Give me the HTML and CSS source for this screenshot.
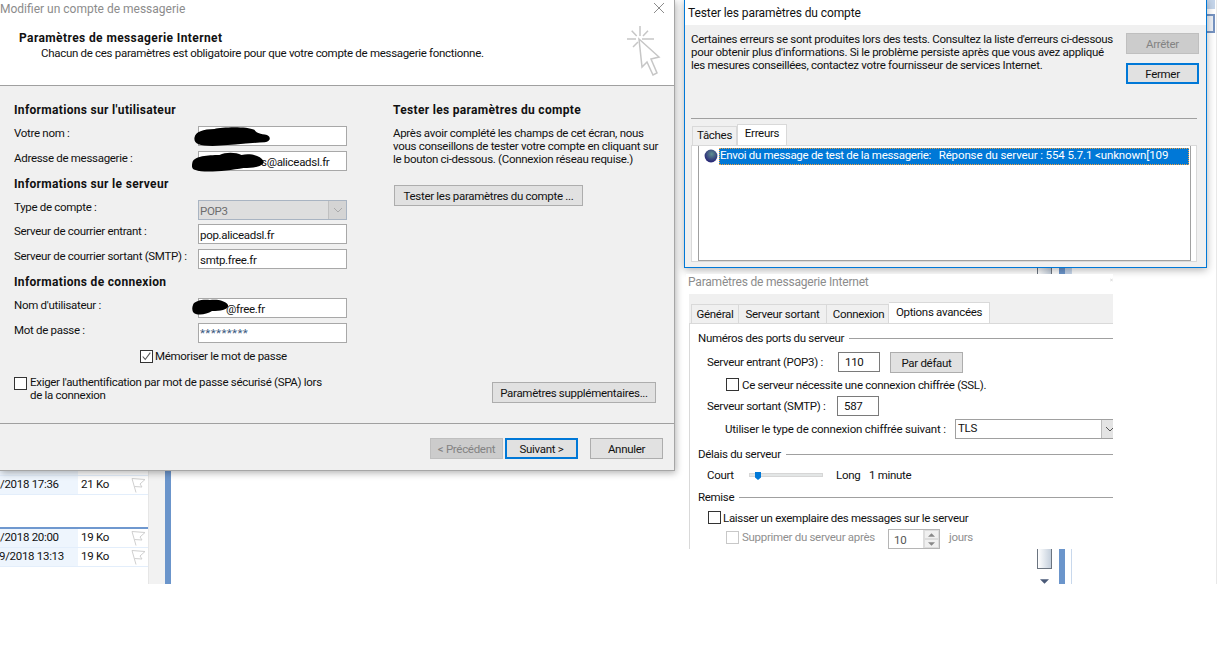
FILE: index.html
```html
<!DOCTYPE html>
<html lang="fr">
<head>
<meta charset="utf-8">
<title>Modifier un compte de messagerie</title>
<link rel="stylesheet" href="styles.css">
</head>
<body>
<div class="desk">

  <section class="maillist">
    <div class="mstub"></div>
    <div class="mrow"><span class="mdate">/2018 17:36</span><span class="msize">21 Ko</span><svg class="flag" viewBox="0 0 14 16"><path d="M1 1.5L14 2.5L9 7L11 10L3.5 9.5M1 1.5L5 15.5" fill="none" stroke="#cfcfcf"/></svg></div>
    <div class="mgap"></div>
    <div class="mrow"><span class="mdate">/2018 20:00</span><span class="msize">19 Ko</span><svg class="flag" viewBox="0 0 14 16"><path d="M1 1.5L14 2.5L9 7L11 10L3.5 9.5M1 1.5L5 15.5" fill="none" stroke="#cfcfcf"/></svg></div>
    <div class="mrow"><span class="mdate mdate-cut">9/2018 13:13</span><span class="msize">19 Ko</span><svg class="flag" viewBox="0 0 14 16"><path d="M1 1.5L14 2.5L9 7L11 10L3.5 9.5M1 1.5L5 15.5" fill="none" stroke="#cfcfcf"/></svg></div>
  </section>
  <div class="vscroll"></div>
  <div class="vbar"></div>

  <div class="scrollpiece sp-top"></div>
  <div class="scrollpiece sp-thumb"></div>
  <svg class="sp-arrow" viewBox="0 0 10 5"><path d="M0 0H10L5 5Z" fill="#4a5a78"/></svg>
  <div class="bluepiece bp-top"></div>
  <div class="bluepiece bp-bottom"></div>
  <div class="edge-a"></div>
  <div class="edge-b"></div>
  <div class="edge-line"></div>

  <section class="win win-account">
    <header class="acc-head">
      <div class="wintitle">Modifier un compte de messagerie</div>
      <svg class="close" viewBox="0 0 12 12"><path d="M1 1L11 11M11 1L1 11" stroke="#8c8c8c" fill="none"/></svg>
      <h1 class="acc-h1">Paramètres de messagerie Internet</h1>
      <p class="acc-sub">Chacun de ces paramètres est obligatoire pour que votre compte de messagerie fonctionne.</p>
      <svg class="cursor" viewBox="0 0 34 50"><g stroke="#c6c6c6" fill="none" stroke-width="1.5"><path d="M13 0V10M0 13H9M15 13H27M4.7 4.7L9.7 10M21 4.7L16 10M6 21L11 16"/><path d="M12 13L32 31L24 33L30 47L26 49L20 36L15 41Z" fill="#fff"/></g></svg>
    </header>

    <div class="acc-body">
      <div class="acc-left">
        <h2 class="sect sect-first">Informations sur l'utilisateur</h2>
        <div class="frow"><label>Votre nom :</label><span class="input"></span></div>
        <div class="frow"><label>Adresse de messagerie :</label><span class="input input-right">s@aliceadsl.fr</span></div>
        <h2 class="sect">Informations sur le serveur</h2>
        <div class="frow frow-type"><label>Type de compte :</label><span class="select"><span>POP3</span><i class="sel-btn"><svg viewBox="0 0 10 6"><path d="M1 1L5 5L9 1" stroke="#aaa" fill="none"/></svg></i></span></div>
        <div class="frow"><label>Serveur de courrier entrant :</label><span class="input">pop.aliceadsl.fr</span></div>
        <div class="frow"><label>Serveur de courrier sortant (SMTP) :</label><span class="input">smtp.free.fr</span></div>
        <h2 class="sect">Informations de connexion</h2>
        <div class="frow"><label>Nom d'utilisateur :</label><span class="input input-user">@free.fr</span></div>
        <div class="frow"><label>Mot de passe :</label><span class="input input-pw">*********</span></div>
        <div class="remember"><span class="check"><svg viewBox="0 0 13 13"><path d="M2 6.5L5 10L11 2" stroke="#555" stroke-width="1.3" fill="none"/></svg></span><span>Mémoriser le mot de passe</span></div>
        <div class="spa"><span class="check"></span><span class="spa-text">Exiger l'authentification par mot de passe sécurisé (SPA) lors de la connexion</span></div>
      </div>
      <div class="acc-right">
        <h2 class="sect sect-first">Tester les paramètres du compte</h2>
        <p class="acc-p">Après avoir complété les champs de cet écran, nous vous conseillons de tester votre compte en cliquant sur le bouton ci-dessous. (Connexion réseau requise.)</p>
        <button class="btn btn-test">Tester les paramètres du compte ...</button>
        <button class="btn btn-more">Paramètres supplémentaires...</button>
      </div>
    </div>

    <footer class="acc-foot">
      <button class="btn btn-foot btn-off">&lt; Précédent</button>
      <button class="btn btn-foot btn-def">Suivant &gt;</button>
      <button class="btn btn-foot btn-cancel">Annuler</button>
    </footer>
  </section>

  <section class="win win-test">
    <div class="test-title">Tester les paramètres du compte</div>
    <div class="test-body">
      <div class="test-top">
        <p class="test-p">Certaines erreurs se sont produites lors des tests. Consultez la liste d'erreurs ci-dessous pour obtenir plus d'informations. Si le problème persiste après que vous avez appliqué les mesures conseillées, contactez votre fournisseur de services Internet.</p>
        <div class="test-btns">
          <button class="btn btn-foot btn-off">Arrêter</button>
          <button class="btn btn-foot btn-def">Fermer</button>
        </div>
      </div>
      <div class="test-rule"></div>
      <div class="test-tabs">
        <span class="ttab">Tâches</span>
        <span class="ttab ttab-on">Erreurs</span>
      </div>
      <div class="test-panel">
        <div class="test-list">
          <div class="err-row">
            <svg class="err-ico" viewBox="0 0 14 14"><defs><radialGradient id="g" cx="0.55" cy="0.35" r="0.6"><stop offset="0" stop-color="#5f8f8f"/><stop offset="1" stop-color="#2a2a78"/></radialGradient></defs><circle cx="7" cy="7" r="6.4" fill="url(#g)"/></svg>
            <span class="err-text">Envoi du message de test de la messagerie:&nbsp;&nbsp; <span class="err-srv">Réponse du serveur : 554 5.7.1 &lt;unknown[109</span></span>
          </div>
        </div>
      </div>
    </div>
  </section>

  <section class="win-adv">
    <div class="adv-title">Paramètres de messagerie Internet</div>
    <svg class="adv-close" viewBox="0 0 6 12"><path d="M0 1L6 7M0 7L6 1" stroke="#b8b8b8" fill="none"/></svg>
    <div class="adv-tabs">
      <span class="atab">Général</span>
      <span class="atab">Serveur sortant</span>
      <span class="atab">Connexion</span>
      <span class="atab atab-on">Options avancées</span>
    </div>
    <div class="adv-panel">
      <div class="legend"><span>Numéros des ports du serveur</span></div>
      <div class="aline aline-pop"><span class="alabel">Serveur entrant (POP3) :</span><span class="abox">110</span><button class="btn btn-def-port">Par défaut</button></div>
      <div class="aline aline-ssl"><span class="check"></span><span class="low">Ce serveur nécessite une connexion chiffrée (SSL).</span></div>
      <div class="aline aline-smtp"><span class="alabel">Serveur sortant (SMTP) :</span><span class="abox">587</span></div>
      <div class="aline aline-enc"><span class="enc-label">Utiliser le type de connexion chiffrée suivant :</span><span class="aselect"><span>TLS</span><i class="asel-btn"><svg viewBox="0 0 10 6"><path d="M1 1L5 5L9 1" stroke="#555" fill="none"/></svg></i></span></div>
      <div class="legend legend-delay"><span>Délais du serveur</span></div>
      <div class="aline aline-delay"><span class="court">Court</span><span class="slider"><i class="thumb"></i></span><span class="long">Long</span><span>1 minute</span></div>
      <div class="legend legend-remise"><span>Remise</span></div>
      <div class="aline aline-keep"><span class="check"></span><span class="low">Laisser un exemplaire des messages sur le serveur</span></div>
      <div class="aline aline-del"><span class="check check-off"></span><span class="del-label">Supprimer du serveur après</span><span class="spin"><span class="spin-val">10</span><span class="spin-btns"><i><svg viewBox="0 0 8 4"><path d="M0 4H8L4 0Z" fill="#888"/></svg></i><i><svg viewBox="0 0 8 4"><path d="M0 0H8L4 4Z" fill="#888"/></svg></i></span></span><span class="jours">jours</span></div>
    </div>
  </section>

  <svg class="blob blob-name" viewBox="0 0 82 20"><path d="M1 11C2 5 10 2 22 2C30 0 56 -1 64 3C66 6 68 7 75 8C82 9 82 15 75 16C60 17 40 19 20 20C5 20 0 17 1 11Z" fill="#000"/></svg>
  <svg class="blob blob-mail" viewBox="0 0 72 20"><path d="M1 10C3 4 16 3 28 3C34 0 44 0 50 3C60 1 69 4 72 9C73 14 64 16 52 16C36 19 12 21 4 18C0 17 0 14 1 10Z" fill="#000"/></svg>
  <svg class="blob blob-user" viewBox="0 0 36 16"><path d="M1 6C2 2 10 0 18 1C26 0 34 2 36 6C37 10 30 12 20 12C14 16 4 17 1 13C0 11 0 8 1 6Z" fill="#000"/></svg>
</div>
</body>
</html>
```
FILE: styles.css
```css
* { box-sizing: border-box; }
html, body { margin: 0; padding: 0; background: #fff; }
body { font: 11.5px/13px Roboto, "Liberation Sans", sans-serif; letter-spacing: -0.3px; color: #111; }
.desk { position: relative; width: 1218px; height: 648px; overflow: hidden; }

/* background mail list */
.maillist { position: absolute; left: 0; top: 471px; width: 149px; height: 113px; border-right: 1px solid #e6e6e6; }
.mstub { height: 5px; border-bottom: 1px solid #e3eefb; background: linear-gradient(90deg, #eef5fd 78px, #fff 78px); }
.mrow { display: flex; align-items: center; height: 19px; border-bottom: 1px solid #e3eefb; }
.mdate { display: block; width: 78px; height: 18px; line-height: 16px; background: #eef5fd; white-space: nowrap; overflow: hidden; }
.mdate-cut { text-indent: -1px; }
.msize { display: block; width: 50px; height: 18px; line-height: 16px; padding-left: 3px; }
.flag { width: 14px; height: 16px; margin-left: 3px; }
.mgap { height: 34px; border-bottom: 2px solid #6f98cf; }
.vscroll { position: absolute; left: 149px; top: 471px; width: 16px; height: 113px; background: #f2f2f2; }
.vbar { position: absolute; left: 165px; top: 471px; width: 6px; height: 113px; background: #6b95cb; }

.scrollpiece { position: absolute; left: 1037px; width: 15px; border-left: 1px solid #6b7480; border-right: 1px solid #6b7480; background: linear-gradient(90deg, #fff, #c4cfdc); }
.sp-top { top: 268px; height: 7px; }
.sp-thumb { top: 549px; height: 20px; border-bottom: 1px solid #6b7480; }
.sp-arrow { position: absolute; left: 1040px; top: 579px; width: 9px; height: 5px; }
.bluepiece { position: absolute; left: 1059px; width: 13px; background: #6b95cb; border-right: 1px solid #c8d8ec; box-shadow: inset -6px 0 0 #fff; }
.bp-top { top: 268px; height: 7px; box-shadow: inset -6px 0 0 #c3d3e8; }
.bp-bottom { top: 549px; height: 35px; }
.edge-a { position: absolute; left: 1207px; top: 0; width: 8px; height: 9px; background: #c5d5ea; }
.edge-b { position: absolute; left: 1207px; top: 14px; width: 8px; height: 19px; border: 2px solid #7694c2; border-left: 0; background: #eef2f8; }
.edge-line { position: absolute; left: 1216px; top: 0; width: 1px; height: 584px; background: #e8e8e8; }

/* windows */
.win { position: absolute; }
.win-account { left: 0; top: 0; width: 675px; height: 471px; background: #f0f0f0; border-right: 1px solid #a6a6a6; border-bottom: 1px solid #a6a6a6; box-shadow: 1px 2px 7px rgba(0,0,0,.3); display: flex; flex-direction: column; }
.acc-head { position: relative; height: 86px; background: #fff; border-bottom: 1px solid #a0a0a0; padding-left: 19px; flex: none; }
.wintitle { margin-left: -19px; padding-top: 3px; font-size: 12px; letter-spacing: 0; color: #8c8c8c; }
.close { position: absolute; left: 653px; top: 2px; width: 12px; height: 12px; }
.cursor { position: absolute; left: 627px; top: 26px; width: 34px; height: 50px; }
.acc-h1 { margin: 16px 0 0; font-size: 12px; line-height: 13px; font-weight: 700; letter-spacing: 0.4px; }
.acc-sub { margin: 2px 0 0 22px; }

.acc-body { flex: 1; display: flex; }
.acc-left { flex: none; width: 393px; padding-left: 14px; }
.acc-right { position: relative; flex: 1; }
.sect { margin: 7px 0 0; font-size: 12px; line-height: 13px; font-weight: 700; letter-spacing: 0.32px; }
.sect-first { margin-top: 0; padding-top: 18px; }
.frow { display: flex; justify-content: space-between; width: 333px; height: 20px; margin-top: 5px; }
.frow label { padding-top: 1px; white-space: nowrap; }
.sect + .frow { margin-top: 9px; }
.frow-type + .frow { margin-top: 4px; }
.input { display: block; width: 149px; height: 20px; background: #fff; border: 1px solid #a8a8a8; padding: 4px 1px 0; white-space: nowrap; }
.input-right { padding-left: 62px; }
.input-user { padding-left: 27px; }
.input-pw { padding-top: 3px; color: #3a5a80; letter-spacing: 0.4px; }
.select { display: flex; justify-content: space-between; width: 149px; height: 20px; border: 1px solid #a9b4c2; background: #dedede; color: #6d6d6d; padding: 4px 1px 0; }
.sel-btn { display: block; width: 18px; height: 18px; margin: -4px -1px 0 0; background: #d4d4d4; border-left: 1px solid #c0c0c0; padding: 6px 4px; }
.sel-btn svg { display: block; width: 10px; height: 6px; }
.remember { display: flex; align-items: center; gap: 2px; margin: 6px 0 0 126px; height: 14px; }
.check { display: block; flex: none; width: 13px; height: 13px; background: #fff; border: 1px solid #333; }
.check svg { display: block; width: 11px; height: 11px; }
.spa { display: flex; gap: 3px; margin-top: 13px; }
.spa .check { margin-top: 1px; }
.spa-text { display: block; width: 296px; }
.acc-p { margin: 10px 0 0; width: 266px; }
.btn { display: block; margin: 0; padding: 2px 0 0; font: inherit; letter-spacing: inherit; color: #111; background: #e1e1e1; border: 1px solid #adadad; height: 21px; line-height: 17px; text-align: center; white-space: nowrap; }
.btn-test { position: absolute; left: 1px; top: 99px; width: 189px; }
.btn-more { position: absolute; left: 99px; top: 296px; width: 164px; }
.acc-foot { flex: none; height: 47px; border-top: 1px solid #a0a0a0; display: flex; padding: 14px 0 0 430px; }
.btn-foot { width: 73px; }
.btn-off { background: #ccc; border-color: #bfbfbf; color: #838383; }
.btn-def { border: 2px solid #0078d7; padding-top: 1px; }
.acc-foot .btn-def { margin-left: 2px; }
.btn-cancel { margin-left: 12px; }

/* test window */
.win-test { left: 684px; top: -1px; width: 523px; height: 269px; background: #fff; border: 1px solid #0078d7; box-shadow: 0 2px 8px rgba(0,0,0,.3); display: flex; flex-direction: column; }
.test-title { height: 25px; padding: 7px 0 0 3px; flex: none; font-size: 12px; letter-spacing: -0.1px; }
.test-body { flex: 1; background: #f0f0f0; padding-left: 6px; }
.test-top { display: flex; justify-content: space-between; height: 93px; width: 508px; }
.test-p { margin: 8px 0 0; width: 428px; }
.test-btns { display: flex; flex-direction: column; gap: 9px; padding-top: 8px; }
.test-rule { height: 1px; width: 506px; background: #a0a0a0; }
.test-tabs { display: flex; align-items: flex-end; height: 26px; padding-left: 1px; }
.ttab { display: block; height: 19px; width: 45px; background: #f0f0f0; border: 1px solid #d9d9d9; border-bottom: 0; text-align: center; padding-top: 2px; }
.ttab-on { height: 21px; width: 50px; background: #fff; padding-top: 2px; }
.test-panel { width: 506px; height: 117px; background: #fff; border: 1px solid #d9d9d9; padding-left: 6px; }
.test-list { width: 493px; height: 115px; border: 1px solid #a0a0a0; border-top: 0; padding: 2px 0 0 5px; }
.err-row { display: flex; align-items: flex-start; gap: 1px; }
.err-ico { width: 14px; height: 14px; flex: none; margin-top: 1px; }
.err-text { display: block; width: 470px; height: 17px; padding: 1px 0 0 1px; background: #0078d7; color: #fff; outline: 1px dotted #f0a040; outline-offset: -1px; white-space: nowrap; }
.err-srv { letter-spacing: -0.12px; }

/* advanced options window */
.win-adv { position: absolute; left: 686px; top: 274px; width: 427px; height: 275px; background: #fff; overflow: hidden; }
.adv-title { height: 20px; padding: 2px 0 0 2px; font-size: 12px; letter-spacing: -0.2px; color: #8c8c8c; white-space: nowrap; }
.adv-close { position: absolute; left: 424px; top: 2px; width: 3px; height: 10px; }
.adv-tabs { display: flex; align-items: flex-end; height: 29px; margin-left: 3px; padding-left: 2px; background: #f0f0f0; }
.atab { display: block; height: 19px; padding-top: 3px; border: 1px solid #d9d9d9; border-bottom: 0; border-left: 0; background: #f0f0f0; white-space: nowrap; text-align: center; }
.atab:first-child { width: 48px; border-left: 1px solid #d9d9d9; }
.atab:nth-child(2) { width: 88px; }
.atab:nth-child(3) { width: 62px; padding-left: 2px; }
.atab-on { width: 101px; height: 21px; background: #fff; padding-top: 3px; }
.adv-panel { margin-left: 3px; height: 226px; background: #fff; border-left: 1px solid #d9d9d9; border-top: 1px solid #d9d9d9; padding-left: 8px; }
.legend { display: flex; align-items: center; gap: 5px; height: 13px; margin-top: 8px; }
.legend::after { content: ""; flex: 1; height: 1px; background: #a0a0a0; }
.aline { display: flex; align-items: center; white-space: nowrap; }
.alabel { display: block; }
.low { display: block; padding-top: 1px; }
.abox { display: block; flex: none; width: 42px; height: 20px; border: 1px solid #7a7a7a; padding: 3px 0 0 6px; background: #fff; }
.aline-pop { margin: 7px 0 0 9px; height: 20px; }
.aline-pop .alabel { width: 131px; }
.btn-def-port { width: 73px; margin-left: 10px; }
.aline-ssl { margin: 6px 0 0 28px; height: 13px; gap: 3px; }
.aline-smtp { margin: 5px 0 0 9px; height: 20px; }
.aline-smtp .alabel { width: 130px; }
.aline-enc { margin: 3px 0 0 27px; height: 20px; }
.enc-label { display: block; flex: none; width: 230px; padding-top: 1px; letter-spacing: -0.2px; }
.aselect { display: flex; justify-content: space-between; flex: none; width: 170px; height: 20px; border: 1px solid #a0a0a0; padding: 2px 0 0 2px; }
.asel-btn { display: block; width: 23px; height: 18px; margin-top: -2px; background: #e4e4e4; border-left: 1px solid #bbb; padding: 6px 3px; }
.asel-btn svg { display: block; width: 10px; height: 6px; }
.legend-delay { margin-top: 9px; }
.aline-delay { margin: 7px 0 0 9px; height: 14px; }
.court { display: block; width: 42px; }
.slider { position: relative; display: block; width: 74px; height: 4px; background: #e3e6e6; border: 1px solid #d6d6d6; }
.thumb { position: absolute; left: 5px; top: -2px; width: 6px; height: 8px; background: #0078d7; clip-path: polygon(0 0, 100% 0, 100% 70%, 50% 100%, 0 70%); }
.long { display: block; margin-left: 13px; width: 33px; }
.legend-remise { margin-top: 9px; }
.aline-keep { margin: 7px 0 0 10px; height: 13px; gap: 2px; }
.aline-del { margin: 5px 0 0 28px; height: 20px; color: #8f8f8f; gap: 3px; }
.aline-del .check { margin-top: -3px; }
.check-off { border-color: #c8c8c8; }
.del-label { display: block; width: 133px; margin-top: -3px; }
.spin { display: flex; flex: none; width: 52px; height: 20px; border: 1px solid #b5b5b5; margin-left: 10px; background: #fff; }
.spin-val { display: block; width: 34px; padding: 4px 0 0 5px; color: #555; }
.spin-btns { flex: 1; display: flex; flex-direction: column; background: #f0f0f0; border-left: 1px solid #ddd; }
.spin-btns i { display: flex; flex: 1; align-items: center; justify-content: center; border: 1px solid #ddd; }
.spin-btns svg { display: block; width: 7px; height: 4px; }
.jours { display: block; margin-left: 6px; margin-top: -3px; }

/* redaction scribbles */
.blob { position: absolute; }
.blob-name { left: 192px; top: 127px; width: 81px; height: 19px; }
.blob-mail { left: 191px; top: 152px; width: 73px; height: 20px; }
.blob-user { left: 192px; top: 299px; width: 36px; height: 16px; }
```
